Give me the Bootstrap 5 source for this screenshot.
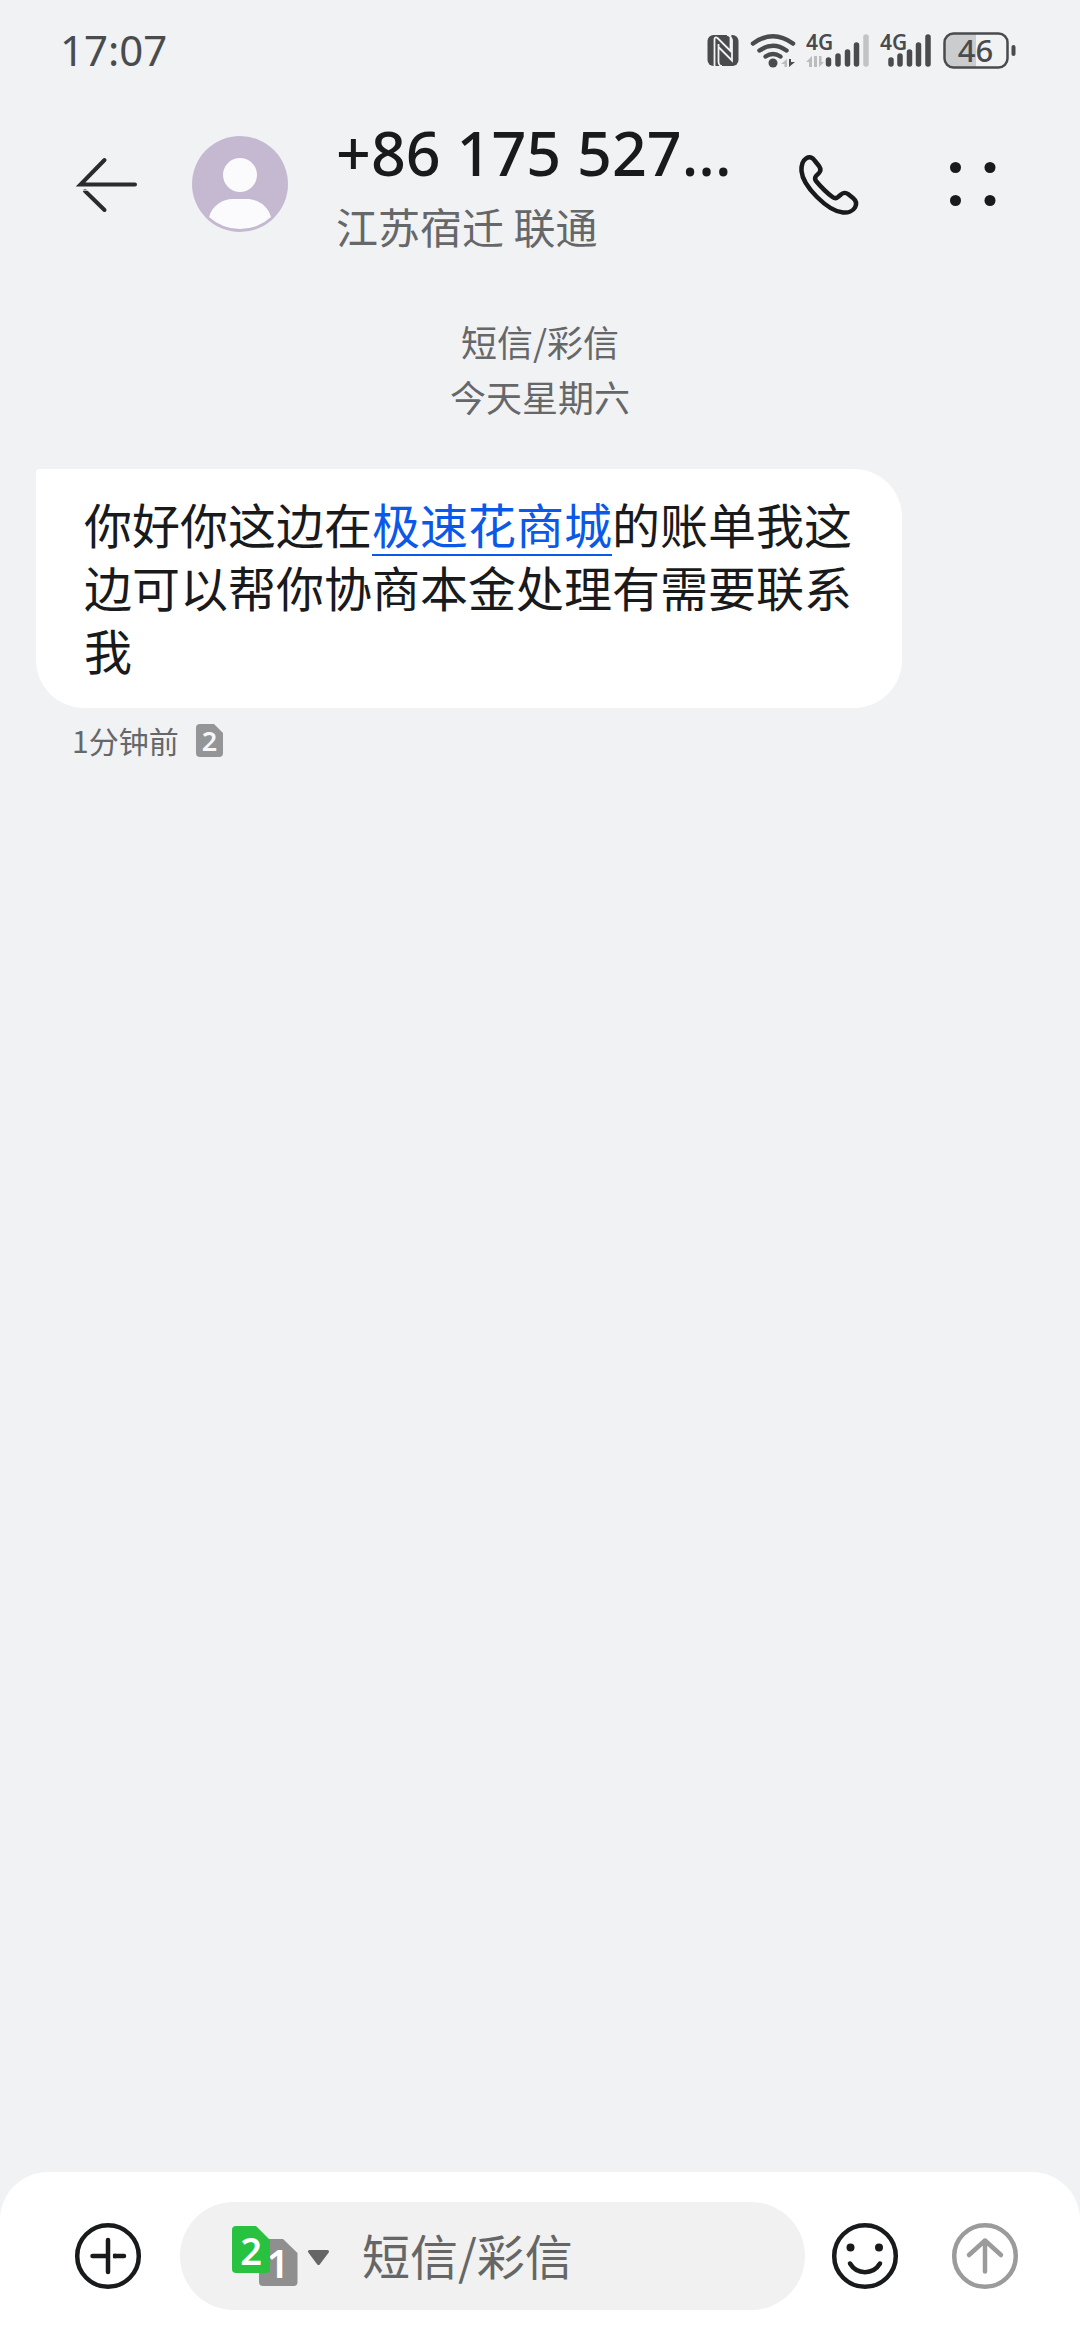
<!DOCTYPE html>
<html lang="zh-CN">
<head>
<meta charset="utf-8">
<meta name="viewport" content="width=device-width, initial-scale=1">
<title>短信</title>
<link rel="stylesheet" href="https://cdn.jsdelivr.net/npm/bootstrap@5.3.0/dist/css/bootstrap.min.css">
<style>
  body { background: #f1f2f4; color: #191a1c; font-family: "Noto Sans CJK SC", "Noto Sans", sans-serif; }
  svg { display: block; flex: none; overflow: visible; }
  svg text { font-family: "Noto Sans", sans-serif; }
  .status-bar { height: 100px; padding: 0 58px 0 60px; color: #4a4b4d; }
  .clock { font-family: "Noto Sans", sans-serif; font-size: 42px; line-height: 60px; }
  .icon-btn { padding: 0; border: 0; background: none; color: #191a1c; flex: none; }
  .chat-header { padding: 12px 72px; height: 168px; }
  .avatar-btn { margin-left: 48px; margin-right: 48px; }
  .peer { min-width: 0; }
  .peer-name { font-family: "Noto Sans", sans-serif; font-size: 61px; line-height: 84px; font-weight: 500; margin: 0; }
  .peer-place { font-size: 42px; line-height: 62px; color: #666769; margin: 0; }
  .day-mark { font-size: 36px; line-height: 55px; color: #666769; padding-top: 46px; }
  .thread { padding: 45px 36px 0; }
  .bubble { background: #fff; border-radius: 4px 48px 48px 48px; padding: 23px 48px 27px; font-size: 48px; line-height: 63px; max-width: 866px; margin: 0; }
  .bubble a { color: #0a59e8; text-decoration: underline; text-decoration-thickness: 2px; text-underline-offset: 10px; }
  .stamp { font-size: 30px; line-height: 44px; color: #666769; padding: 10px 36px; gap: 17px; }
  .composer { background: #fff; border-radius: 48px 48px 0 0; padding: 30px 59px 30px 72px; gap: 24px; }
  .field { background: #f1f1f1; border-radius: 54px; height: 108px; padding-left: 48px; margin-left: 12px; gap: 30px; min-width: 0; }
  .field input { border: 0; outline: 0; background: none; padding: 0 0 4px; min-width: 0; width: 100%; font-size: 48px; line-height: 72px; color: #191a1c; }
  .field input::placeholder { color: #666; opacity: 1; }
</style>
<script src="https://cdn.jsdelivr.net/npm/bootstrap@5.3.0/dist/js/bootstrap.bundle.min.js"></script>
</head>
<body class="d-flex flex-column min-vh-100">

<div class="status-bar d-flex align-items-center justify-content-between">
  <span class="clock">17:07</span>
  <div class="d-flex">
    <svg width="40" height="40" viewBox="704 30 40 40" role="img" aria-label="NFC">
      <rect x="707.500" y="35" width="31" height="31" rx="6" fill="#4a4b4d"/>
      <path d="M714.500 66V39Q715 36 718 38.500L730.500 51V35M718.500 44V62Q719 66 722 66M718.500 47L732 60.500V40Q731 36 727 35" fill="none" stroke="#f1f2f4" stroke-width="1.800"/>
    </svg>
    <svg width="56" height="40" viewBox="744 30 56 40" role="img" aria-label="Wi-Fi">
      <g fill="none" stroke="#4a4b4d" stroke-width="4.500" stroke-linecap="round">
        <path d="M753 43.500Q773 29 793 43.500"/><path d="M759.500 50.500Q773 41 786.500 50.500"/><path d="M765.500 56.500Q773 51.500 780.500 56.500"/>
      </g>
      <circle cx="773" cy="63" r="4.500" fill="#4a4b4d"/>
      <path d="M787 59V67H784.500V64H781Z" fill="#bbbcbe"/><path d="M789 59H791V62H795L789 67Z" fill="#4a4b4d"/>
    </svg>
    <svg width="74" height="40" viewBox="800 30 74 40" role="img" aria-label="SIM 1">
      <text x="806" y="50" font-size="21" font-weight="600" fill="#4a4b4d">4G</text>
      <g fill="none" stroke="#4a4b4d" stroke-width="5.500" stroke-linecap="round">
        <path d="M828.500 60V64M838 56V64M847.500 52V64M856.500 45V64"/><path d="M866 37V64" stroke="#c2c3c5"/>
      </g>
      <path d="M812 56V67H809V62H806ZM814 56H817V67H814ZM819 56H821.500V62H824L819 67Z" fill="#bbbcbe"/>
    </svg>
    <svg width="64" height="40" viewBox="874 30 64 40" role="img" aria-label="SIM 2">
      <text x="880" y="50" font-size="21" font-weight="600" fill="#4a4b4d">4G</text>
      <path d="M891 60V64M900 56V64M909.500 52V64M918.500 45V64M928 37V64" fill="none" stroke="#4a4b4d" stroke-width="5.500" stroke-linecap="round"/>
    </svg>
    <svg width="84" height="40" viewBox="938 30 84 40" role="img" aria-label="46%">
      <path d="M976 33.500H953.500A9 9 0 0 0 944.500 42.500V58.500A9 9 0 0 0 953.500 67.500H976Z" fill="#cbccce"/>
      <rect x="944.500" y="33.500" width="63" height="34" rx="9" fill="none" stroke="#4a4b4d" stroke-width="2.500"/>
      <rect x="1011.500" y="45" width="4" height="11" rx="2" fill="#4a4b4d"/>
      <text x="975.500" y="62" font-size="31" font-weight="500" text-anchor="middle" fill="#4a4b4d">46</text>
    </svg>
  </div>
</div>

<header class="chat-header d-flex align-items-center">
  <button class="icon-btn" type="button" aria-label="返回">
    <svg width="72" height="72" viewBox="72 148 72 72" fill="none" stroke="#2a2b2d" stroke-width="4" stroke-linecap="round"><path d="M135 184.500H80.500L104.500 160"/><path d="M85 191L104.500 210" /><path d="M82 190.200H88" stroke="#f1f2f4" stroke-width="1" stroke-linecap="butt"/></svg>
  </button>
  <button class="icon-btn avatar-btn" type="button" aria-label="联系人">
    <svg width="96" height="96" viewBox="0 0 96 96"><circle cx="48" cy="48" r="48" fill="#c4b9d1"/><circle cx="48" cy="39" r="17" fill="#fbfafc"/><path d="M17 81C20 70 30 63 41 63H55C66 63 76 70 79 81A46 46 0 0 1 17 81Z" fill="#fbfafc"/></svg>
  </button>
  <div class="peer flex-grow-1">
    <h1 class="peer-name text-nowrap">+86 175 527...</h1>
    <p class="peer-place">江苏宿迁 联通</p>
  </div>
  <div class="d-flex gap-5">
    <button class="icon-btn me-4" type="button" aria-label="拨打电话">
      <svg width="72" height="72" viewBox="792 148 72 72" fill="none" stroke="#191a1c" stroke-width="4.500" stroke-linejoin="round"><path d="M802.500 163C804 159 808 156.500 811 157.500C813 158 814 159.500 815 161L819 166C821 169 821 171 819 173L816 176C814.500 178 815 179.500 816 181C821 187 827 193 832.500 197C834.500 198.500 836.500 198.500 838 197L841 194.500C843 192.500 846 192.500 848 194L853 198C856 200.500 857 204 855 207.500C853 211 848 213 843 212.500C837 212 827 207 817 197C807 187 802 177 801.500 171C801.300 168 801.500 166 802.500 163Z"/></svg>
    </button>
    <button class="icon-btn" type="button" aria-label="更多">
      <svg width="72" height="72" viewBox="936 148 72 72" fill="#191a1c"><circle cx="955.500" cy="167.500" r="5.500"/><circle cx="990" cy="167.500" r="5.500"/><circle cx="955.500" cy="200.500" r="5.500"/><circle cx="990" cy="200.500" r="5.500"/></svg>
    </button>
  </div>
</header>

<main class="flex-grow-1">
  <div class="day-mark text-center"><div>短信/彩信</div><div>今天星期六</div></div>
  <div class="thread d-flex flex-column align-items-start">
    <p class="bubble">你好你这边在<a href="#">极速花商城</a>的账单我这边可以帮你协商本金处理有需要联系我</p>
    <div class="stamp d-flex align-items-center">
      <span>1分钟前</span>
      <svg width="27" height="33" viewBox="0 0 27 33" role="img" aria-label="卡 2"><path d="M4 0H18L27 9V29A4 4 0 0 1 23 33H4A4 4 0 0 1 0 29V4A4 4 0 0 1 4 0Z" fill="#949597"/><text x="13.500" y="27" font-size="27" font-weight="600" text-anchor="middle" fill="#f6f7f8">2</text></svg>
    </div>
  </div>
</main>

<form class="composer d-flex align-items-center">
  <button class="icon-btn" type="button" aria-label="添加">
    <svg width="72" height="72" viewBox="72 2220 72 72" fill="none" stroke="#191a1c" stroke-width="4.500" stroke-linecap="round"><circle cx="108" cy="2256" r="30.800"/><path d="M92.500 2256H107M108 2240V2272M115 2256H124"/><path d="M113 2256H116" stroke-linecap="butt"/></svg>
  </button>
  <div class="field d-flex align-items-center flex-grow-1">
    <button class="icon-btn" type="button" aria-label="选择发送卡">
      <svg width="104" height="64" viewBox="228 2224 104 64"><path d="M263 2239H283L297.500 2253V2282A4 4 0 0 1 293.500 2286H263A4 4 0 0 1 259 2282V2243A4 4 0 0 1 263 2239Z" fill="#8f8f8f"/><text x="278" y="2278" font-size="40" font-weight="600" text-anchor="middle" fill="#fff">1</text><path d="M236 2226H256L270 2240V2269A4 4 0 0 1 266 2273H236A4 4 0 0 1 232 2269V2230A4 4 0 0 1 236 2226Z" fill="#29c240"/><text x="251" y="2265" font-size="38" font-weight="600" text-anchor="middle" fill="#fff">2</text><path d="M309.500 2251.500H327.500L318.500 2263.500Z" fill="#666" stroke="#666" stroke-width="3" stroke-linejoin="round"/></svg>
    </button>
    <input class="flex-grow-1" type="text" placeholder="短信/彩信" aria-label="短信/彩信">
  </div>
  <button class="icon-btn" type="button" aria-label="表情">
    <svg width="72" height="72" viewBox="829 2220 72 72" fill="none" stroke="#191a1c" stroke-width="4.500" stroke-linecap="round"><circle cx="865" cy="2256" r="30.800"/><path d="M850 2263.500C857 2275 873 2275 880 2263.500"/><g fill="#191a1c" stroke="none"><circle cx="850.500" cy="2247.500" r="4"/><circle cx="879" cy="2247.500" r="4"/></g></svg>
  </button>
  <button class="icon-btn ms-4" type="submit" aria-label="发送">
    <svg width="72" height="72" viewBox="949 2220 72 72" fill="none" stroke="#9b9b9b" stroke-width="4.500" stroke-linecap="round" stroke-linejoin="round"><circle cx="985" cy="2256" r="30.800"/><path d="M985 2271.500V2240.500M969 2255L985 2240.500L1001 2255"/></svg>
  </button>
</form>
</body>
</html>
